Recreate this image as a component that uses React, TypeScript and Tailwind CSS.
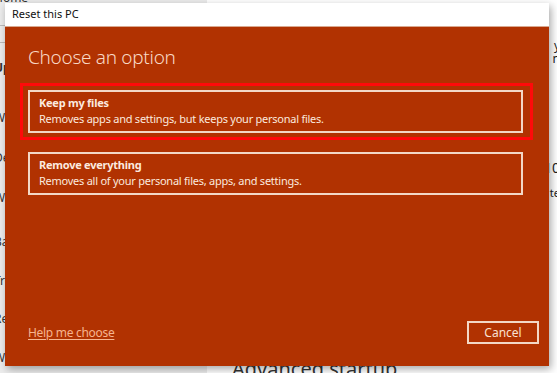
import React from "react";

const font = { fontFamily: '"Noto Sans", "Open Sans", sans-serif' };

function Option({ title, desc, highlighted }: { title: string; desc: string; highlighted?: boolean }) {
  const box = (
    <div className="border-2 border-[#f3d8c6] px-[9px] pt-[3px] pb-[4px] text-[#fbe9df] tracking-[-0.25px]">
      <div className="text-[11px] font-bold leading-[16px]">{title}</div>
      <div className="text-[11px] leading-[16px]">{desc}</div>
    </div>
  );
  if (highlighted) {
    return (
      <div className="-ml-[8px] -mr-[10px] border-[3px] border-[#ff0a0a] pl-[5px] pr-[7px] py-[4px]">{box}</div>
    );
  }
  return <div>{box}</div>;
}

export default function App() {
  return (
    <div className="relative w-[557px] h-[373px] overflow-hidden bg-white" style={font}>
      {/* background settings page */}
      <div className="flex h-full">
        <div className="w-[213px] h-full bg-[#ececec] flex flex-col text-[12px] text-[#333] -ml-[6px]">
          <div className="-mt-[9px] leading-[14px]">Home</div>
          <div className="mt-[20px] h-[18px] border-y border-[#bbb] w-[20px]" />
          <div className="mt-[16px] font-bold">Update</div>
          <div className="mt-[32px]">Windows</div>
          <div className="mt-[22px]">Delivery</div>
          <div className="mt-[22px]">Windows</div>
          <div className="mt-[26px]">Backup</div>
          <div className="mt-[21px]">Troubleshoot</div>
          <div className="mt-[20px]">Recovery</div>
          <div className="mt-[21px]">Windows</div>
        </div>
        <div className="flex-1 h-full flex flex-col pl-[25px] text-[#222]">
          <div className="-mt-[33px] text-[28px] leading-[36px] tracking-[1px]">RECOVERY</div>
          <div className="flex flex-col items-end text-[12px] leading-[13px] -mr-[3px]">
            <div className="mt-[36px]">y</div>
            <div>n</div>
            <div className="mt-[96px] text-[14px]">10</div>
            <div className="mt-[12px] text-[11px]">te</div>
          </div>
          <div className="mt-auto mb-[-8px] text-[20px] leading-[24px] text-[#333]">Advanced startup</div>
        </div>
      </div>

      {/* dialog */}
      <div className="absolute left-[5px] top-[3px] w-[544px] h-[363px] flex flex-col shadow-[2px_3px_8px_rgba(0,0,0,0.35)]">
        <div className="h-[24px] bg-white flex items-center pl-[7px] text-[11px] text-[#111] border-b border-[#d9a990]">
          Reset this PC
        </div>
        <div className="flex-1 bg-[#b13201] flex flex-col px-[23px]">
          <div className="mt-[16px] text-[19px] font-light leading-[28px] tracking-[-0.3px] text-[#f8d9c6]">
            Choose an option
          </div>
          <div className="mt-[12px] flex flex-col gap-[12px] mr-[3px]">
            <Option highlighted title="Keep my files" desc="Removes apps and settings, but keeps your personal files." />
            <Option title="Remove everything" desc="Removes all of your personal files, apps, and settings." />
          </div>
          <div className="mt-auto mb-[22px] flex items-end justify-between">
            <a className="text-[12px] text-[#f6b48f] underline underline-offset-2 tracking-[-0.3px] mb-[2px]">Help me choose</a>
            <button className="w-[72px] h-[23px] border-2 border-[#f3d8c6] text-[12px] text-[#f8e1d4] -mr-[13px]">Cancel</button>
          </div>
        </div>
      </div>
    </div>
  );
}
